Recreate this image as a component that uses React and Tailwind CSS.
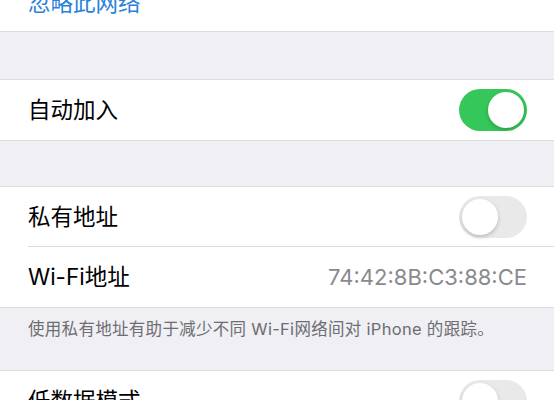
import React from "react";

const font = { fontFamily: '"Inter", "Noto Sans CJK SC", sans-serif' };

function Toggle({ on }) {
  return (
    <div
      className={
        "relative w-[68px] h-[42px] rounded-full shrink-0 " +
        (on ? "bg-[#35c759]" : "bg-[#e9e9ea]")
      }
    >
      <div
        className={
          "absolute top-[3px] w-[36px] h-[36px] rounded-full bg-white shadow-[0_2px_4px_rgba(0,0,0,0.2)] " +
          (on ? "right-[3px]" : "left-[3px]")
        }
      />
    </div>
  );
}

function Row({ label, right, sep }) {
  return (
    <div className="relative h-[60px] flex items-center justify-between pl-[28px] pr-[27px] bg-white">
      <span className="text-[22.5px] leading-none text-black">{label}</span>
      {right}
      {sep && <div className="absolute left-[28px] right-0 bottom-0 h-px bg-[#dcdce0]" />}
    </div>
  );
}

export default function App() {
  return (
    <div className="w-[554px] h-[400px] overflow-hidden bg-[#efeff4]" style={font}>
      <div className="-mt-[28px] h-[60px] flex items-center pl-[28px] pt-[4px] bg-white border-b border-[#dcdce0]">
        <span className="text-[22.5px] leading-none text-[#2a82d8]">忽略此网络</span>
      </div>
      <div className="h-[47px]" />
      <div className="border-y border-[#dcdce0]">
        <Row label="自动加入" right={<Toggle on />} />
      </div>
      <div className="h-[45px]" />
      <div className="border-y border-[#dcdce0]">
        <Row label="私有地址" right={<Toggle />} sep />
        <Row
          label="Wi-Fi地址"
          right={<span className="text-[22px] leading-none text-[#8a8a8e]">74:42:8B:C3:88:CE</span>}
        />
      </div>
      <div className="h-[62px] pl-[28px] pt-[9px]">
        <span className="text-[16.5px] tracking-[0.3px] leading-none text-[#6d6d72]">
          使用私有地址有助于减少不同 Wi-Fi网络间对 iPhone 的跟踪。
        </span>
      </div>
      <div className="border-t border-[#dcdce0]">
        <Row label="低数据模式" right={<Toggle />} />
      </div>
    </div>
  );
}
